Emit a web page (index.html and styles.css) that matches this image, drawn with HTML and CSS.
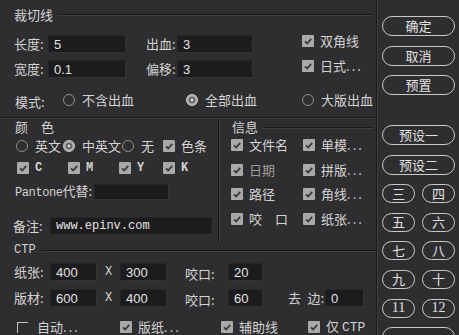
FILE: index.html
```html
<!DOCTYPE html>
<html lang="zh-CN">
<head>
    <meta charset="UTF-8">
    <title>裁切线</title>
    <link rel="stylesheet" href="styles.css">
</head>
<body>
<div class="dialog">
    <div class="main">
        <!-- 裁切线 -->
        <section class="cut">
            <div class="group-title t-cut"><span>裁切线</span></div>
            <div class="cut-grid">
                <div class="field"><span class="lbl w34">长度:</span><input class="input w78" value="5"></div>
                <div class="field"><span class="lbl w31">出血:</span><input class="input w76" value="3"></div>
                <span class="check"><span class="box"><svg viewBox="0 0 12 12"><path d="M3 6.3 5.2 8.5 9.2 3.8"/></svg></span><span>双角线</span></span>

                <div class="field"><span class="lbl w34">宽度:</span><input class="input w78" value="0.1"></div>
                <div class="field"><span class="lbl w31">偏移:</span><input class="input w76" value="3"></div>
                <span class="check"><span class="box"><svg viewBox="0 0 12 12"><path d="M3 6.3 5.2 8.5 9.2 3.8"/></svg></span><span>日式<span class="dots">...</span></span></span>
            </div>
            <div class="mode-row">
                <span class="lbl">模式:</span>
                <span class="opt"><span class="radio"></span>不含出血</span>
                <span class="opt"><span class="radio on"></span>全部出血</span>
                <span class="opt"><span class="radio"></span>大版出血</span>
            </div>
        </section>

        <div class="mid">
            <!-- 颜色 -->
            <section class="color">
                <div class="plain-title">颜　色</div>
                <div class="lang-row">
                    <span class="opt"><span class="radio"></span>英文</span>
                    <span class="opt"><span class="radio on"></span>中英文</span>
                    <span class="opt"><span class="radio"></span>无</span>
                    <span class="check"><span class="box"><svg viewBox="0 0 12 12"><path d="M3 6.3 5.2 8.5 9.2 3.8"/></svg></span><span>色条</span></span>
                </div>
                <div class="cmyk-row">
                    <span class="check mono-c"><span class="box"><svg viewBox="0 0 12 12"><path d="M3 6.3 5.2 8.5 9.2 3.8"/></svg></span><span>C</span></span>
                    <span class="check mono-c"><span class="box"><svg viewBox="0 0 12 12"><path d="M3 6.3 5.2 8.5 9.2 3.8"/></svg></span><span>M</span></span>
                    <span class="check mono-c"><span class="box"><svg viewBox="0 0 12 12"><path d="M3 6.3 5.2 8.5 9.2 3.8"/></svg></span><span>Y</span></span>
                    <span class="check mono-c"><span class="box"><svg viewBox="0 0 12 12"><path d="M3 6.3 5.2 8.5 9.2 3.8"/></svg></span><span>K</span></span>
                </div>
                <div class="pantone-row">
                    <span class="lbl"><span class="mono pantone">Pantone</span>代替:</span>
                    <input class="input w75 short" value="">
                </div>
                <div class="note-row">
                    <span class="lbl w37">备注:</span>
                    <input class="input w163 url" value="www.epinv.com">
                </div>
            </section>

            <!-- 信息 -->
            <section class="info">
                <div class="group-title t-info"><span>信息</span></div>
                <div class="info-grid">
                    <span class="check"><span class="box"><svg viewBox="0 0 12 12"><path d="M3 6.3 5.2 8.5 9.2 3.8"/></svg></span><span>文件名</span></span>
                    <span class="check"><span class="box"><svg viewBox="0 0 12 12"><path d="M3 6.3 5.2 8.5 9.2 3.8"/></svg></span><span>单模<span class="dots">...</span></span></span>
                    <span class="check dim"><span class="box"><svg viewBox="0 0 12 12"><path d="M3 6.3 5.2 8.5 9.2 3.8"/></svg></span><span>日期</span></span>
                    <span class="check"><span class="box"><svg viewBox="0 0 12 12"><path d="M3 6.3 5.2 8.5 9.2 3.8"/></svg></span><span>拼版<span class="dots">...</span></span></span>
                    <span class="check"><span class="box"><svg viewBox="0 0 12 12"><path d="M3 6.3 5.2 8.5 9.2 3.8"/></svg></span><span>路径</span></span>
                    <span class="check"><span class="box"><svg viewBox="0 0 12 12"><path d="M3 6.3 5.2 8.5 9.2 3.8"/></svg></span><span>角线<span class="dots">...</span></span></span>
                    <span class="check"><span class="box"><svg viewBox="0 0 12 12"><path d="M3 6.3 5.2 8.5 9.2 3.8"/></svg></span><span>咬　口</span></span>
                    <span class="check"><span class="box"><svg viewBox="0 0 12 12"><path d="M3 6.3 5.2 8.5 9.2 3.8"/></svg></span><span>纸张<span class="dots">...</span></span></span>
                </div>
            </section>
        </div>

        <!-- CTP -->
        <section class="ctp">
            <div class="group-title t-ctp"><span class="mono title-ctp">CTP</span></div>
            <div class="ctp-row first">
                <span class="lbl w36">纸张:</span>
                <input class="input w47" value="400">
                <span class="x mono">X</span>
                <input class="input w47" value="300">
                <span class="lbl w43 bite">咬口:</span>
                <input class="input w35" value="20">
            </div>
            <div class="ctp-row">
                <span class="lbl w36">版材:</span>
                <input class="input w47" value="600">
                <span class="x mono">X</span>
                <input class="input w47" value="400">
                <span class="lbl w43 bite">咬口:</span>
                <input class="input w35" value="60">
                <span class="lbl w37 trim">去&ensp;边:</span>
                <input class="input w39" value="0">
            </div>
            <div class="bottom-row">
                <span class="check"><span class="box off"></span><span>自动<span class="dots">...</span></span></span>
                <span class="check"><span class="box"><svg viewBox="0 0 12 12"><path d="M3 6.3 5.2 8.5 9.2 3.8"/></svg></span><span>版纸<span class="dots">...</span></span></span>
                <span class="check"><span class="box"><svg viewBox="0 0 12 12"><path d="M3 6.3 5.2 8.5 9.2 3.8"/></svg></span><span>辅助线</span></span>
                <span class="check"><span class="box"><svg viewBox="0 0 12 12"><path d="M3 6.3 5.2 8.5 9.2 3.8"/></svg></span><span>仅 <span class="mono big">CTP</span></span></span>
            </div>
        </section>
    </div>

    <div class="side">
        <button class="btn">确定</button>
        <button class="btn">取消</button>
        <button class="btn">预置</button>
        <button class="btn preset">预设一</button>
        <button class="btn">预设二</button>
        <div class="pair"><button class="btn small">三</button><button class="btn small">四</button></div>
        <div class="pair"><button class="btn small">五</button><button class="btn small">六</button></div>
        <div class="pair"><button class="btn small">七</button><button class="btn small">八</button></div>
        <div class="pair"><button class="btn small">九</button><button class="btn small">十</button></div>
        <div class="pair"><button class="btn small num">11</button><button class="btn small num">12</button></div>
        <button class="btn"></button>
    </div>
</div>
</body>
</html>
```

FILE: styles.css
```css
* {
    box-sizing: border-box;
}

body {
    margin: 0;
    background: #2e2d2f;
    color: #d4d4d4;
    font-family: "Noto Sans CJK SC", "Noto Sans", sans-serif;
    font-size: 13px;
    line-height: 18px;
    overflow: hidden;
}

.dialog {
    display: flex;
    width: 459px;
    height: 335px;
    overflow: hidden;
}

.main {
    flex: none;
    width: 377px;
    border-right: 1px solid #1b1b1c;
    box-shadow: 1px 0 0 #403f42;
}

.mono {
    font-family: "Liberation Mono", monospace;
    font-size: 11px;
}

.mono.big {
    font-size: 13px;
}

.mono.pantone {
    font-size: 12px;
    letter-spacing: -0.4px;
}

.mono.title-ctp {
    font-size: 12px;
}

.dots {
    letter-spacing: 2px;
}

/* group titles with an etched line */
.group-title {
    display: flex;
    align-items: center;
    gap: 5px;
    height: 15px;
    padding-right: 3px;
}

.group-title::after {
    content: "";
    flex: 1;
    height: 1px;
    background: #1b1b1c;
    box-shadow: 0 1px 0 #403f42;
}

.t-cut { padding-left: 14px; }
.t-info { padding-left: 13px; height: 16px; }
.t-ctp { padding-left: 14px; height: 14px; padding-right: 0; }

.plain-title {
    height: 16px;
    padding-left: 15px;
    line-height: 16px;
}

.lbl {
    flex: none;
    white-space: nowrap;
}

.w31 { width: 31px; }
.w34 { width: 34px; }
.w36 { width: 36px; }
.w37 { width: 37px; }
.w43 { width: 43px; }

.input {
    flex: none;
    height: 18px;
    margin: 0;
    padding: 0 5px;
    background: #1c1b1d;
    border: 1px solid #252426;
    border-right-color: #343336;
    border-bottom-color: #343336;
    color: #e4e4e4;
    font-family: "Liberation Sans", sans-serif;
    font-size: 13px;
    outline: none;
}

.input.short { height: 16px; }
.input.url {
    font-family: "Liberation Mono", monospace;
    font-size: 12px;
}

.w35 { width: 35px; }
.w39 { width: 39px; }
.w47 { width: 47px; }
.w75 { width: 75px; }
.w76 { width: 76px; }
.w78 { width: 78px; }
.w163 { width: 163px; }

/* checkbox and radio */
.check,
.opt {
    display: flex;
    align-items: center;
    gap: 6px;
    height: 20px;
    white-space: nowrap;
}

.opt { gap: 7px; }

.box {
    flex: none;
    display: flex;
    width: 12px;
    height: 12px;
    background: #a9a9aa;
    border-radius: 1px;
}

.box svg {
    width: 12px;
    height: 12px;
    fill: none;
    stroke: #3a393c;
    stroke-width: 1.8;
}

.box.off {
    width: 11px;
    height: 11px;
    margin-right: 3px;
    background: none;
    border-top: 1.5px solid #c4c4c4;
    border-left: 1.5px solid #c4c4c4;
    border-radius: 0;
}

.radio {
    flex: none;
    width: 12px;
    height: 12px;
    border-radius: 50%;
    border: 1.3px solid #8f8f90;
}

.radio.on {
    border-color: #c9c9c9;
    background: radial-gradient(circle, #d0d0d0 0 1.3px, #5e5d5f 1.8px 3px, #a9a9aa 3.6px);
}

.dim { color: #9c9c9c; }

.mono-c {
    font-family: "Liberation Mono", monospace;
    font-size: 12px;
    font-weight: bold;
}

/* 裁切线 */
.cut {
    padding: 7px 0 10px;
}

.cut-grid {
    display: grid;
    grid-template-columns: 132px 156px auto;
    row-gap: 7px;
    margin-top: 13px;
    padding-left: 14px;
}

.field {
    display: flex;
    align-items: center;
    height: 18px;
}

.cut-grid .check {
    height: 18px;
    margin-top: -3px;
}

.mode-row {
    display: grid;
    grid-template-columns: 48px 123px 116px auto;
    align-items: center;
    height: 18px;
    margin-top: 11px;
    padding-left: 15px;
}

.mode-row .lbl {
    padding-top: 4px;
}

/* 颜色 / 信息 */
.mid {
    display: flex;
    height: 126px;
    border-top: 1px solid #1b1b1c;
    box-shadow: inset 0 1px 0 #403f42;
}

.color {
    flex: none;
    width: 219px;
    padding-top: 1px;
    border-right: 1px solid #1b1b1c;
    box-shadow: 1px 0 0 #403f42;
}

.lang-row {
    display: grid;
    grid-template-columns: 47px 59px 41px auto;
    margin-top: 1px;
    padding-left: 16px;
}

.cmyk-row {
    display: grid;
    grid-template-columns: 51px 51px 44px auto;
    margin-top: 2px;
    padding-left: 17px;
}

.pantone-row {
    display: flex;
    align-items: center;
    gap: 2px;
    height: 20px;
    margin-top: 4px;
    padding-left: 15px;
}

.note-row {
    display: flex;
    align-items: center;
    height: 20px;
    margin-top: 14px;
    padding-left: 13px;
}

.info {
    flex: 1;
    padding-top: 1px;
}

.info-grid {
    display: grid;
    grid-template-columns: 72px auto;
    grid-auto-rows: 20px;
    row-gap: 4.7px;
    padding-left: 12px;
}

/* CTP */
.ctp-row {
    display: flex;
    align-items: center;
    height: 18px;
    margin-top: 8px;
    padding-left: 14px;
}

.ctp-row.first {
    margin-top: 6px;
}

.x {
    width: 23px;
    text-align: center;
    font-size: 12px;
}

.bite {
    margin-left: 18px;
    padding-top: 4px;
}

.trim {
    margin-left: 25px;
}

.bottom-row {
    display: grid;
    grid-template-columns: 103px 101px 87px auto;
    margin-top: 10px;
    padding-left: 17px;
}

/* right column buttons */
.side {
    flex: 1;
    display: flex;
    flex-direction: column;
    gap: 9.6px;
    padding: 16px 0 0 5px;
}

.btn {
    flex: none;
    width: 73px;
    height: 20px;
    padding: 0;
    background: transparent;
    border: 1.5px solid #c9c9c9;
    border-radius: 10px;
    color: #e2e2e2;
    font-family: "Noto Sans CJK SC", sans-serif;
    font-size: 13px;
    line-height: 16px;
}

.btn.preset {
    margin-top: 20.2px;
}

.pair {
    display: flex;
    gap: 7px;
}

.btn.small {
    width: 33px;
    height: 19px;
}

.btn.num {
    font-family: "Liberation Serif", serif;
    font-size: 14px;
}
```
